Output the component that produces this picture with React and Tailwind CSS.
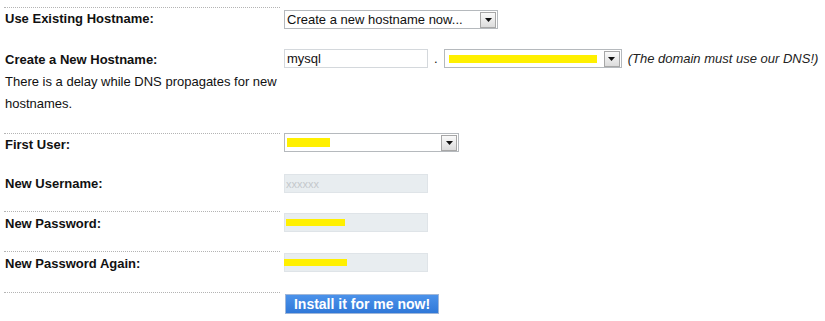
const font = { fontFamily: '"Liberation Sans", Arial, sans-serif' };

function Arrow() {
  return (
    <span className="flex h-[16px] w-[16px] items-center justify-center border border-[#a7a7a7] bg-gradient-to-b from-[#fafafa] to-[#dcdcdc]">
      <svg width="7" height="4" viewBox="0 0 7 4">
        <path d="M0 0h7L3.5 4z" fill="#111" />
      </svg>
    </span>
  );
}

function Select({ width, children }) {
  return (
    <div
      className="flex h-[19px] items-center justify-between border border-[#b5b9bd] bg-white pl-[2px] pr-[1px]"
      style={{ width }}
    >
      <div className="flex-1 overflow-hidden whitespace-nowrap text-[13px] leading-[16px] text-[#111]">{children}</div>
      <Arrow />
    </div>
  );
}

function Field({ filled, children }) {
  return (
    <div
      className={`flex h-[19px] w-[144px] items-center border ${
        filled ? "border-[#dfe4e8] bg-[#e8edf0]" : "border-[#d4d8dc] bg-white"
      }`}
    >
      {children}
    </div>
  );
}

function Mark({ w, ml = 0, h = 8 }) {
  return <div className="bg-[#fff000]" style={{ width: w, height: h, marginLeft: ml }} />;
}

function Row({ h, line, lpt, fmt, label, children }) {
  return (
    <div className="flex px-[4px]" style={{ height: h }}>
      <div
        className={`w-[276px] ${line ? "border-t border-dotted border-[#b4b4b4]" : "border-t border-transparent"}`}
        style={{ paddingTop: lpt }}
      >
        {label}
      </div>
      <div className="ml-[4px]" style={{ marginTop: fmt }}>
        {children}
      </div>
    </div>
  );
}

const Label = ({ children }) => (
  <div className="pl-[1px] text-[13px] font-bold leading-[16px] text-[#111]">{children}</div>
);

export default function App() {
  return (
    <div className="h-[321px] w-[825px] bg-white pt-[7px]" style={font}>
      <Row h={33} line lpt={3} fmt={3} label={<Label>Use Existing Hostname:</Label>}>
        <Select width={214}>Create a new hostname now...</Select>
      </Row>

      <Row
        h={93}
        lpt={8}
        fmt={9}
        label={
          <div className="pl-[1px] text-[13px] leading-[22px] text-[#111]">
            <div className="font-bold">Create a New Hostname:</div>
            <div>There is a delay while DNS propagates for new</div>
            <div>hostnames.</div>
          </div>
        }
      >
        <div className="flex items-center">
          <Field>
            <span className="pl-[2px] text-[13px] leading-[16px] text-[#111]">mysql</span>
          </Field>
          <span className="mx-[6px] text-[13px] leading-[16px] text-[#111]">.</span>
          <Select width={178}>
            <Mark w={148} ml={2} />
          </Select>
          <span className="ml-[6px] text-[13px] italic leading-[16px] text-[#222]">
            (The domain must use our DNS!)
          </span>
        </div>
      </Row>

      <Row h={33} line lpt={3} fmt={0} label={<Label>First User:</Label>}>
        <Select width={175}>
          <Mark w={43} h={9} />
        </Select>
      </Row>

      <Row h={45} lpt={9} fmt={8} label={<Label>New Username:</Label>}>
        <Field filled>
          <span className="pl-[1px] text-[11px] leading-[14px] text-[#c4c8cc]">xxxxxx</span>
        </Field>
      </Row>

      <Row h={40} line lpt={4} fmt={2} label={<Label>New Password:</Label>}>
        <Field filled>
          <Mark w={59} ml={1} h={7} />
        </Field>
      </Row>

      <Row h={41} line lpt={4} fmt={2} label={<Label>New Password Again:</Label>}>
        <Field filled>
          <Mark w={63} ml={-1} h={7} />
        </Field>
      </Row>

      <Row h={29} line lpt={0} fmt={0}>
        <button className="ml-[1px] h-[20px] w-[154px] border border-[#9fb6d8] bg-gradient-to-b from-[#4b92ea] to-[#2f78d8] text-[14px] font-bold leading-[16px] text-white">
          Install it for me now!
        </button>
      </Row>
    </div>
  );
}
